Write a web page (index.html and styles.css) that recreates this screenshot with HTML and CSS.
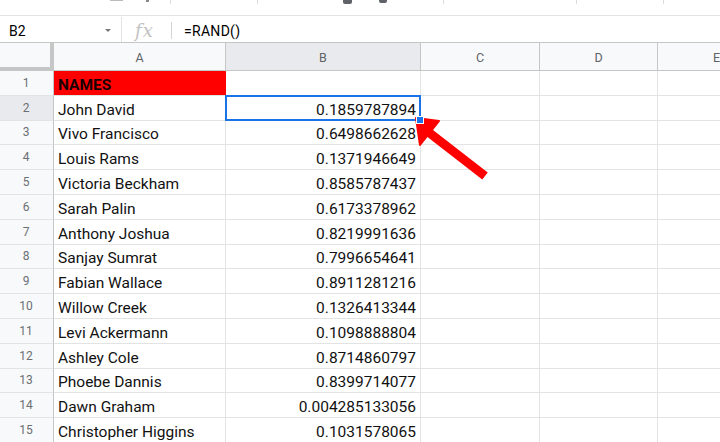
FILE: index.html
```html
<!DOCTYPE html>
<html>
<head>
<meta charset="utf-8">
<link rel="stylesheet" href="styles.css">
</head>
<body>
<div class="app">
  <div class="toolbar">
    <span class="tb-bar"></span>
    <span class="tb-bit"></span>
    <span class="tb-sep s1"></span>
    <span class="tb-sep s2"></span>
    <span class="tb-icon i1"></span>
    <span class="tb-icon i2"></span>
    <span class="tb-sep s3"></span>
    <span class="tb-sep s4"></span>
    <span class="tb-sep s5"></span>
  </div>
  <div class="formula-bar">
    <div class="name-box">
      <span class="name">B2</span>
      <span class="caret"></span>
    </div>
    <div class="vsep tall"></div>
    <div class="fx">fx</div>
    <div class="vsep short"></div>
    <div class="formula">=RAND()</div>
  </div>
  <div class="sheet">
    <div class="corner"></div>
    <div class="colh">A</div>
    <div class="colh sel">B</div>
    <div class="colh">C</div>
    <div class="colh">D</div>
    <div class="colh">E</div>

    <div class="rowh">1</div><div class="cell red">NAMES</div><div class="cell"></div><div class="cell"></div><div class="cell"></div><div class="cell"></div>
    <div class="rowh sel">2</div><div class="cell">John David</div><div class="cell num active">0.1859787894<span class="handle"></span></div><div class="cell"></div><div class="cell"></div><div class="cell"></div>
    <div class="rowh">3</div><div class="cell">Vivo Francisco</div><div class="cell num">0.6498662628</div><div class="cell"></div><div class="cell"></div><div class="cell"></div>
    <div class="rowh">4</div><div class="cell">Louis Rams</div><div class="cell num">0.1371946649</div><div class="cell"></div><div class="cell"></div><div class="cell"></div>
    <div class="rowh">5</div><div class="cell">Victoria Beckham</div><div class="cell num">0.8585787437</div><div class="cell"></div><div class="cell"></div><div class="cell"></div>
    <div class="rowh">6</div><div class="cell">Sarah Palin</div><div class="cell num">0.6173378962</div><div class="cell"></div><div class="cell"></div><div class="cell"></div>
    <div class="rowh">7</div><div class="cell">Anthony Joshua</div><div class="cell num">0.8219991636</div><div class="cell"></div><div class="cell"></div><div class="cell"></div>
    <div class="rowh">8</div><div class="cell">Sanjay Sumrat</div><div class="cell num">0.7996654641</div><div class="cell"></div><div class="cell"></div><div class="cell"></div>
    <div class="rowh">9</div><div class="cell">Fabian Wallace</div><div class="cell num">0.8911281216</div><div class="cell"></div><div class="cell"></div><div class="cell"></div>
    <div class="rowh">10</div><div class="cell">Willow Creek</div><div class="cell num">0.1326413344</div><div class="cell"></div><div class="cell"></div><div class="cell"></div>
    <div class="rowh">11</div><div class="cell">Levi Ackermann</div><div class="cell num">0.1098888804</div><div class="cell"></div><div class="cell"></div><div class="cell"></div>
    <div class="rowh">12</div><div class="cell">Ashley Cole</div><div class="cell num">0.8714860797</div><div class="cell"></div><div class="cell"></div><div class="cell"></div>
    <div class="rowh">13</div><div class="cell">Phoebe Dannis</div><div class="cell num">0.8399714077</div><div class="cell"></div><div class="cell"></div><div class="cell"></div>
    <div class="rowh">14</div><div class="cell">Dawn Graham</div><div class="cell num">0.004285133056</div><div class="cell"></div><div class="cell"></div><div class="cell"></div>
    <div class="rowh">15</div><div class="cell">Christopher Higgins</div><div class="cell num">0.1031578065</div><div class="cell"></div><div class="cell"></div><div class="cell"></div>
  </div>
  <svg class="arrow" width="720" height="442" viewBox="0 0 720 442">
    <line x1="427" y1="131" x2="485" y2="176" stroke="#ff0000" stroke-width="9"/>
    <polygon points="416,118 439,121 420,145" fill="#ff0000" stroke="#ff0000" stroke-width="2" stroke-linejoin="round"/>
  </svg>
</div>
</body>
</html>
```
FILE: styles.css
```css
html, body {
  margin: 0;
  padding: 0;
  background: #ffffff;
}
body {
  width: 720px;
  height: 442px;
  overflow: hidden;
  font-family: Roboto, "Liberation Sans", sans-serif;
  color: #000;
}
.app {
  position: relative;
  width: 720px;
  height: 442px;
  overflow: hidden;
}
.toolbar {
  height: 15px;
  border-bottom: 1px solid #e3e3e3;
  display: flex;
  align-items: flex-start;
}
.tb-bar {
  width: 13px;
  height: 1px;
  background: #bcbcbc;
  margin-left: 110px;
}
.tb-bit {
  width: 3px;
  height: 2px;
  background: #888;
  margin-left: 23px;
}
.tb-sep {
  width: 1px;
  height: 4px;
  background: #dadce0;
}
.s1 { margin-left: 21px; }
.s2 { margin-left: 86px; }
.tb-icon {
  width: 8px;
  height: 4px;
  background: #5f6368;
  border-radius: 0 0 2px 2px;
}
.i1 { margin-left: 85px; width: 9px; }
.i2 { margin-left: 27px; height: 3px; }
.s3 { margin-left: 56px; }
.s4 { margin-left: 132px; }
.s5 { margin-left: 86px; }

.formula-bar {
  height: 26px;
  border-bottom: 1px solid #c4c7c5;
  display: flex;
  align-items: center;
}
.name-box {
  width: 121px;
  flex: none;
  display: flex;
  align-items: center;
  font-size: 14px;
  padding-left: 9px;
  padding-top: 3px;
  box-sizing: border-box;
}
.name {
  flex: 1;
}
.caret {
  width: 0;
  height: 0;
  border-left: 3px solid transparent;
  border-right: 3px solid transparent;
  border-top: 3px solid #777;
  margin-right: 10px;
}
.vsep {
  flex: none;
  width: 1px;
  background: #e3e3e3;
}
.vsep.tall {
  align-self: stretch;
  margin-top: 1px;
}
.vsep.short {
  height: 17px;
  margin-top: 3px;
  background: #d5d5d5;
}
.fx {
  width: 49px;
  flex: none;
  box-sizing: border-box;
  padding-left: 13px;
  padding-top: 2px;
  font-family: "DejaVu Serif", "Liberation Serif", serif;
  font-style: italic;
  font-size: 18px;
  letter-spacing: 1px;
  color: #c2c2c2;
}
.formula {
  padding-left: 12px;
  padding-top: 3px;
  font-size: 14px;
  letter-spacing: 0.3px;
}

.sheet {
  display: grid;
  grid-template-columns: 54px 172px 195px 119px 118px 118px;
  grid-template-rows: 28px repeat(15, 24.8px);
}
.sheet > div {
  box-sizing: border-box;
}
.corner {
  background: #f8f9fa;
  border-right: 4px solid #c4c7c5;
  border-bottom: 4px solid #c4c7c5;
}
.colh {
  background: #f8f9fa;
  border-right: 1px solid #c4c7c5;
  border-bottom: 1px solid #c4c7c5;
  display: flex;
  align-items: center;
  justify-content: center;
  font-size: 12.5px;
  color: #5f6368;
  padding-top: 1px;
}
.colh.sel {
  background: #e8eaed;
}
.rowh {
  background: #f8f9fa;
  border-right: 1px solid #c4c7c5;
  border-bottom: 1px solid #e2e3e3;
  display: flex;
  align-items: center;
  justify-content: center;
  font-size: 12px;
  color: #6b6f73;
  padding-right: 1px;
}
.rowh.sel {
  background: #e8eaed;
}
.cell {
  border-right: 1px solid #e2e3e3;
  border-bottom: 1px solid #e2e3e3;
  display: flex;
  align-items: flex-end;
  padding: 0 4px 1px 4px;
  font-size: 15.5px;
  color: #111;
  white-space: nowrap;
  overflow: visible;
}
.cell.num {
  justify-content: flex-end;
}
.cell.red {
  background: #ff0000;
  font-weight: bold;
  color: #1a0000;
  border-right-color: #ff0000;
}
.cell.active {
  position: relative;
}
.cell.active::after {
  content: "";
  position: absolute;
  left: -1px;
  top: -1px;
  right: -1px;
  bottom: -1px;
  border: 2px solid #1a73e8;
}
.handle {
  position: absolute;
  right: -4px;
  bottom: -4px;
  width: 6px;
  height: 6px;
  background: #1a73e8;
  border: 1px solid #ffffff;
  z-index: 2;
}
.arrow {
  position: absolute;
  left: 0;
  top: 0;
  pointer-events: none;
}
```
